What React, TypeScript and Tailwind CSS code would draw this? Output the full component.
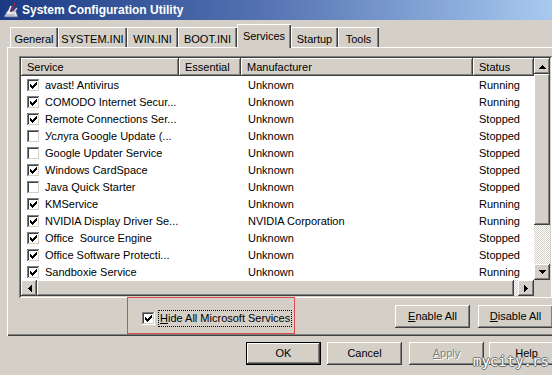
import React from 'react'

const raised =
    'shadow-[inset_-1px_-1px_0_#404040,inset_1px_1px_0_#ffffff,inset_-2px_-2px_0_#808080]'
const sunken =
    'shadow-[inset_1px_1px_0_#808080,inset_-1px_-1px_0_#ffffff,inset_2px_2px_0_#404040,inset_-2px_-2px_0_#d4d0c8]'
const dither =
    'bg-[repeating-conic-gradient(#ffffff_0_25%,#d4d0c8_0_50%)] bg-[length:2px_2px]'

interface Service {
    name: string
    on: boolean
    maker: string
    status: string
}

const services: Service[] = [
    { name: 'avast! Antivirus', on: true, maker: 'Unknown', status: 'Running' },
    { name: 'COMODO Internet Secur...', on: true, maker: 'Unknown', status: 'Running' },
    { name: 'Remote Connections Ser...', on: true, maker: 'Unknown', status: 'Stopped' },
    { name: 'Услуга Google Update (...', on: false, maker: 'Unknown', status: 'Stopped' },
    { name: 'Google Updater Service', on: false, maker: 'Unknown', status: 'Stopped' },
    { name: 'Windows CardSpace', on: true, maker: 'Unknown', status: 'Stopped' },
    { name: 'Java Quick Starter', on: false, maker: 'Unknown', status: 'Stopped' },
    { name: 'KMService', on: true, maker: 'Unknown', status: 'Running' },
    { name: 'NVIDIA Display Driver Se...', on: true, maker: 'NVIDIA Corporation', status: 'Running' },
    { name: 'Office  Source Engine', on: true, maker: 'Unknown', status: 'Stopped' },
    { name: 'Office Software Protecti...', on: true, maker: 'Unknown', status: 'Stopped' },
    { name: 'Sandboxie Service', on: true, maker: 'Unknown', status: 'Running' },
]

const tabs = [
    { label: 'General', w: 'w-[48px]' },
    { label: 'SYSTEM.INI', w: 'w-[69px]' },
    { label: 'WIN.INI', w: 'w-[51px]' },
    { label: 'BOOT.INI', w: 'w-[59px]' },
    { label: 'Services', w: 'w-[54px]', active: true },
    { label: 'Startup', w: 'w-[47px]' },
    { label: 'Tools', w: 'w-[41px]' },
]

function CheckBox({ checked }: { checked: boolean }) {
    const cols = [5, 6, 7, 6, 5, 4, 3]
    return (
        <svg width="13" height="13" viewBox="0 0 13 13" shapeRendering="crispEdges" className="shrink-0">
            <rect width="13" height="13" fill="#fff" />
            <rect x="0" y="0" width="12" height="1" fill="#808080" />
            <rect x="0" y="0" width="1" height="12" fill="#808080" />
            <rect x="1" y="1" width="10" height="1" fill="#404040" />
            <rect x="1" y="1" width="1" height="10" fill="#404040" />
            <rect x="1" y="11" width="11" height="1" fill="#d4d0c8" />
            <rect x="11" y="1" width="1" height="11" fill="#d4d0c8" />
            {checked &&
                cols.map((y, i) => (
                    <rect key={i} x={3 + i} y={y} width="1" height="3" fill="#000" />
                ))}
        </svg>
    )
}

const arrowRot = {
    up: '',
    down: 'rotate-180',
    left: '-rotate-90',
    right: 'rotate-90',
}

function Arrow({ dir }: { dir: keyof typeof arrowRot }) {
    return (
        <svg width="7" height="7" viewBox="0 0 7 7" shapeRendering="crispEdges" className={arrowRot[dir]}>
            <rect x="3" y="2" width="1" height="1" fill="#000" />
            <rect x="2" y="3" width="3" height="1" fill="#000" />
            <rect x="1" y="4" width="5" height="1" fill="#000" />
            <rect x="0" y="5" width="7" height="1" fill="#000" />
        </svg>
    )
}

function ScrollBtn({ dir }: { dir: keyof typeof arrowRot }) {
    return (
        <div className={`w-[16px] h-[16px] shrink-0 bg-[#d4d0c8] flex items-center justify-center ${raised}`}>
            <Arrow dir={dir} />
        </div>
    )
}

function TitleIcon() {
    return (
        <svg width="16" height="16" viewBox="0 0 16 16" className="shrink-0">
            <path d="M1 15 L4 9 L13 9 L15 15 Z" fill="#e8e8e8" stroke="#4a5a8a" strokeWidth="1" />
            <path d="M3 13 L12 13" stroke="#8a94b8" strokeWidth="1" />
            <path d="M5 11 L8 4" stroke="#ffffff" strokeWidth="1.5" />
            <path d="M8 10 L12 1" stroke="#c02030" strokeWidth="1.2" />
            <path d="M10 11 L14 6" stroke="#d0d0e0" strokeWidth="1.5" />
        </svg>
    )
}

function Button({
    children,
    w = 'w-[75px]',
    extra = '',
    def = false,
}: {
    children: React.ReactNode
    w?: string
    extra?: string
    def?: boolean
}) {
    const border = def
        ? 'shadow-[inset_0_0_0_1px_#000000,inset_-2px_-2px_0_#404040,inset_2px_2px_0_#ffffff,inset_-3px_-3px_0_#808080]'
        : raised
    return (
        <div className={`${w} h-[23px] shrink-0 bg-[#d4d0c8] flex items-center justify-center ${border} ${extra}`}>
            {children}
        </div>
    )
}

export default function App() {
    return (
        <div className="relative w-[552px] h-[375px] overflow-hidden bg-[#d4d0c8] text-[11px] text-black font-['Liberation_Sans',Arial,sans-serif]">
            {/* title bar */}
            <div className="h-[20px] flex items-center bg-linear-to-r from-[#1c3a84] via-[#5876b4] to-[#a8caf0]">
                <div className="ml-[3px]">
                    <TitleIcon />
                </div>
                <span className="ml-[3px] text-white font-bold text-[12px] leading-none">
                    System Configuration Utility
                </span>
            </div>

            {/* tabs */}
            <div className="flex items-end pl-[10px] pt-[4px]">
                {tabs.map((t) =>
                    t.active ? (
                        <div
                            key={t.label}
                            className={`${t.w} h-[24px] -mb-px relative z-10 bg-[#d4d0c8] flex justify-center pt-[4px] shadow-[inset_1px_1px_0_#ffffff,inset_-1px_0_0_#404040,inset_-2px_0_0_#808080]`}
                        >
                            {t.label}
                        </div>
                    ) : (
                        <div
                            key={t.label}
                            className={`${t.w} h-[20px] flex justify-center pt-[4px] shadow-[inset_1px_1px_0_#ffffff,inset_-1px_0_0_#404040,inset_-2px_0_0_#808080]`}
                        >
                            {t.label}
                        </div>
                    )
                )}
            </div>

            {/* tab panel */}
            <div className="ml-[7px] w-[560px] border-l border-t border-white pl-[11px] pt-[8px] pb-[2px] shadow-[inset_0_-1px_0_#404040,inset_0_-2px_0_#808080]">
                {/* list view */}
                <div className={`w-[533px] p-[2px] ${sunken}`}>
                    <div className="flex">
                        <div className="w-[513px] bg-white">
                            <div className="flex h-[18px] bg-[#d4d0c8]">
                                <div className={`w-[158px] pl-[6px] flex items-center ${raised}`}>Service</div>
                                <div className={`w-[62px] pl-[6px] flex items-center ${raised}`}>Essential</div>
                                <div className={`w-[232px] pl-[6px] flex items-center ${raised}`}>Manufacturer</div>
                                <div className={`w-[61px] pl-[6px] flex items-center ${raised}`}>Status</div>
                            </div>
                            {services.map((s) => (
                                <div key={s.name} className="flex h-[17px] items-center pt-px leading-[13px]">
                                    <div className="w-[158px] pl-[6px] flex items-center gap-[5px] whitespace-pre">
                                        <CheckBox checked={s.on} />
                                        <span>{s.name}</span>
                                    </div>
                                    <div className="w-[62px]" />
                                    <div className="w-[232px] pl-[7px]">{s.maker}</div>
                                    <div className="w-[61px] pl-[6px]">{s.status}</div>
                                </div>
                            ))}
                        </div>
                        {/* vertical scrollbar */}
                        <div className={`w-[16px] flex flex-col ${dither}`}>
                            <ScrollBtn dir="up" />
                            <div className={`h-[151px] bg-[#d4d0c8] ${raised}`} />
                            <div className="h-[39px]" />
                            <ScrollBtn dir="down" />
                        </div>
                    </div>
                    {/* horizontal scrollbar */}
                    <div className="flex h-[16px]">
                        <div className={`w-[513px] flex ${dither}`}>
                            <ScrollBtn dir="left" />
                            <div className={`w-[477px] bg-[#d4d0c8] ${raised}`} />
                            <div className="w-[4px]" />
                            <ScrollBtn dir="right" />
                        </div>
                        <div className="w-[16px] bg-[#d4d0c8]" />
                    </div>
                </div>

                {/* below list */}
                <div className="flex -mt-px">
                    <div className="ml-[108px] w-[168px] h-[37px] border border-[#e04a4a] pl-[14px] pt-[12px]">
                        <div className="flex items-center gap-[3px]">
                            <CheckBox checked />
                            <span className="border border-dotted border-black px-px leading-[15px] whitespace-nowrap">
                                <span className="underline">H</span>ide All Microsoft Services
                            </span>
                        </div>
                    </div>
                    <Button extra="ml-[100px] mt-[8px]">
                        <span>
                            <span className="underline">E</span>nable All
                        </span>
                    </Button>
                    <Button extra="ml-[8px] mt-[8px]">
                        <span>
                            <span className="underline">D</span>isable All
                        </span>
                    </Button>
                </div>
            </div>

            {/* dialog buttons */}
            <div className="flex mt-[6px] pl-[246px]">
                <Button def>OK</Button>
                <Button extra="ml-[6px]">Cancel</Button>
                <Button extra="ml-[7px]">
                    <span className="text-[#808080] [text-shadow:1px_1px_0_#ffffff]">
                        <span className="underline">A</span>pply
                    </span>
                </Button>
                <Button extra="ml-[5px]">Help</Button>
            </div>

            {/* watermark */}
            <div className="absolute left-[473px] top-[354px] text-[14px] leading-none text-white font-['DejaVu_Sans_Mono',monospace] [text-shadow:1px_0_0_#707070,-1px_0_0_#707070,0_1px_0_#707070,0_-1px_0_#707070]">
                mycity.rs
            </div>
        </div>
    )
}
